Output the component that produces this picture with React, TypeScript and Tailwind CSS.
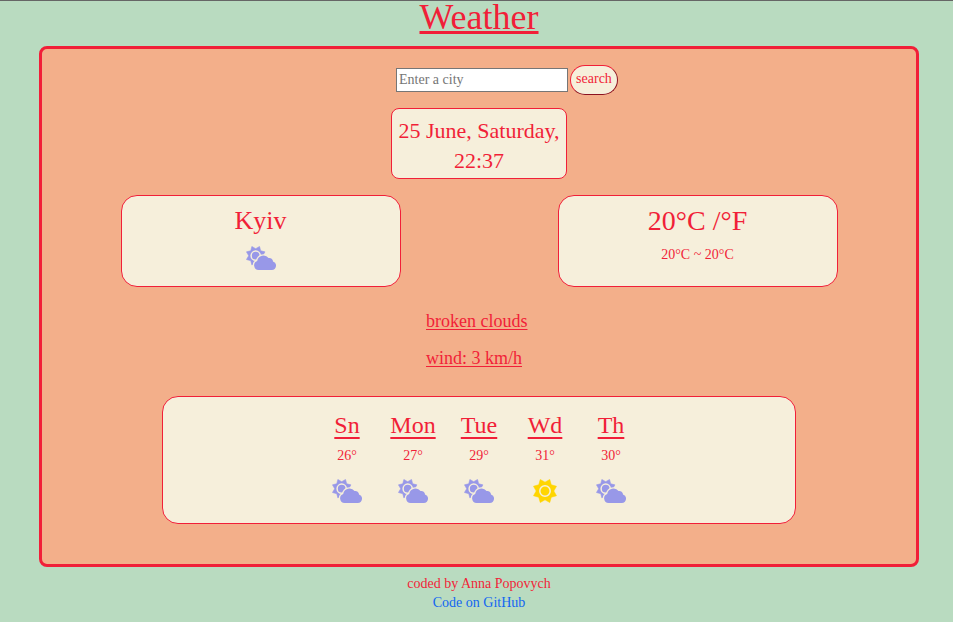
type Day = { name: string; temp: string; sunny?: boolean };

const days: Day[] = [
  { name: "Sn", temp: "26°" },
  { name: "Mon", temp: "27°" },
  { name: "Tue", temp: "29°" },
  { name: "Wd", temp: "31°", sunny: true },
  { name: "Th", temp: "30°" },
];

// Eight-pointed star with its points at 22.5° + 45° steps
function star(cx: number, cy: number, outer: number, inner: number) {
  return Array.from({ length: 16 }, (_, i) => {
    const angle = (i * Math.PI) / 8;
    const radius = i % 2 ? outer : inner;
    return `${(cx + radius * Math.cos(angle)).toFixed(2)},${(cy + radius * Math.sin(angle)).toFixed(2)}`;
  }).join(" ");
}

function WeatherIcon({ sunny }: { sunny?: boolean }) {
  if (sunny) {
    return (
      <svg viewBox="0 0 24 24" className="h-6 w-6" role="img" aria-label="sunny">
        <polygon points={star(12, 12, 12.4, 8.8)} fill="#ffd500" stroke="#ffd500" strokeWidth="0.6" strokeLinejoin="round" />
        <circle cx="12" cy="12" r="5.2" fill="#ffd500" stroke="#f6efdb" strokeWidth="1.5" />
      </svg>
    );
  }
  return (
    <svg viewBox="0 0 30 24" className="h-6 w-[30px]" role="img" aria-label="partly cloudy">
      <polygon points={star(9.7, 9.7, 10, 7)} fill="#9898e8" stroke="#9898e8" strokeWidth="0.6" strokeLinejoin="round" />
      <circle cx="9.7" cy="9.7" r="4.6" fill="#9898e8" stroke="#f6efdb" strokeWidth="1.5" />
      <path
        d="M12.6 24a4.7 4.7 0 0 1-1.4-9.1 6.4 6.4 0 0 1 11.4-2.8 3.6 3.6 0 0 1 4.4 3.5A4.3 4.3 0 0 1 25.8 24z"
        fill="#9898e8"
        stroke="#f6efdb"
        strokeWidth="2.6"
        paintOrder="stroke"
      />
    </svg>
  );
}

function SearchForm() {
  return (
    <form className="flex items-center justify-center gap-0.5 pl-14" onSubmit={(e) => e.preventDefault()}>
      <input
        type="text"
        aria-label="City"
        placeholder="Enter a city"
        className="h-6 w-[172px] border border-[#767676] bg-white px-0.5 text-sm text-black placeholder:text-[#757575]"
      />
      <button
        type="submit"
        className="h-[30px] w-12 rounded-2xl border border-t-[#f11f38] border-l-[#f11f38] border-r-[#8c1220] border-b-[#8c1220] bg-[#f6efdb] pb-0.5 text-sm"
      >
        search
      </button>
    </form>
  );
}

export default function App() {
  return (
    <div className="min-h-screen border-t border-[#666666] bg-[#b9dbc0] pr-[34px] pl-[39px] font-['Liberation_Serif',serif] text-sm font-normal text-[#f11f38]">
      <h1 className="h-[45px] text-center text-4xl leading-8 underline decoration-[3px] underline-offset-2">
        Weather
      </h1>
      <main className="rounded-lg border-[3px] border-[#f11f38] bg-[#f3af8a] pt-4 pb-10">
        <SearchForm />
        <div className="mx-auto mt-[13px] w-44 rounded-lg border border-[#f11f38] bg-[#f6efdb] pt-[7px] pb-0.5 text-center text-[22px] leading-[30px]">
          25 June, Saturday, 22:37
        </div>
        <div className="mt-4 grid grid-cols-2 justify-items-center">
          <section className="flex h-[92px] w-[280px] flex-col items-center rounded-2xl border border-[#f11f38] bg-[#f6efdb] pt-[7px]">
            <h2 className="text-[26px] leading-9">Kyiv</h2>
            <div className="mt-[7px]">
              <WeatherIcon />
            </div>
          </section>
          <section className="flex h-[92px] w-[280px] flex-col items-center rounded-2xl border border-[#f11f38] bg-[#f6efdb] pt-[7px]">
            <h2 className="text-[28px] leading-9">20°C /°F</h2>
            <p className="mt-1.5 leading-5">20°C ~ 20°C</p>
          </section>
        </div>
        <ul className="mx-auto mt-[22px] flex w-[106px] flex-col gap-3 text-lg leading-[25px] whitespace-nowrap underline underline-offset-2">
          <li>broken clouds</li>
          <li>wind: 3 km/h</li>
        </ul>
        <section className="mx-auto mt-[25px] flex h-32 w-[634px] max-w-full justify-center rounded-2xl border border-[#f11f38] bg-[#f6efdb] pt-3">
          {days.map((day) => (
            <div key={day.name} className="flex w-[66px] flex-col items-center">
              <h3 className="text-2xl leading-8 underline decoration-2 underline-offset-4">{day.name}</h3>
              <p className="mt-[5px] leading-5">{day.temp}</p>
              <div className="mt-[13px]">
                <WeatherIcon sunny={day.sunny} />
              </div>
            </div>
          ))}
        </section>
      </main>
      <footer className="pt-[7px] text-center leading-[19px]">
        <p>coded by Anna Popovych</p>
        <a href="#github" className="text-[#1266f1]">
          Code on GitHub
        </a>
      </footer>
    </div>
  );
}
